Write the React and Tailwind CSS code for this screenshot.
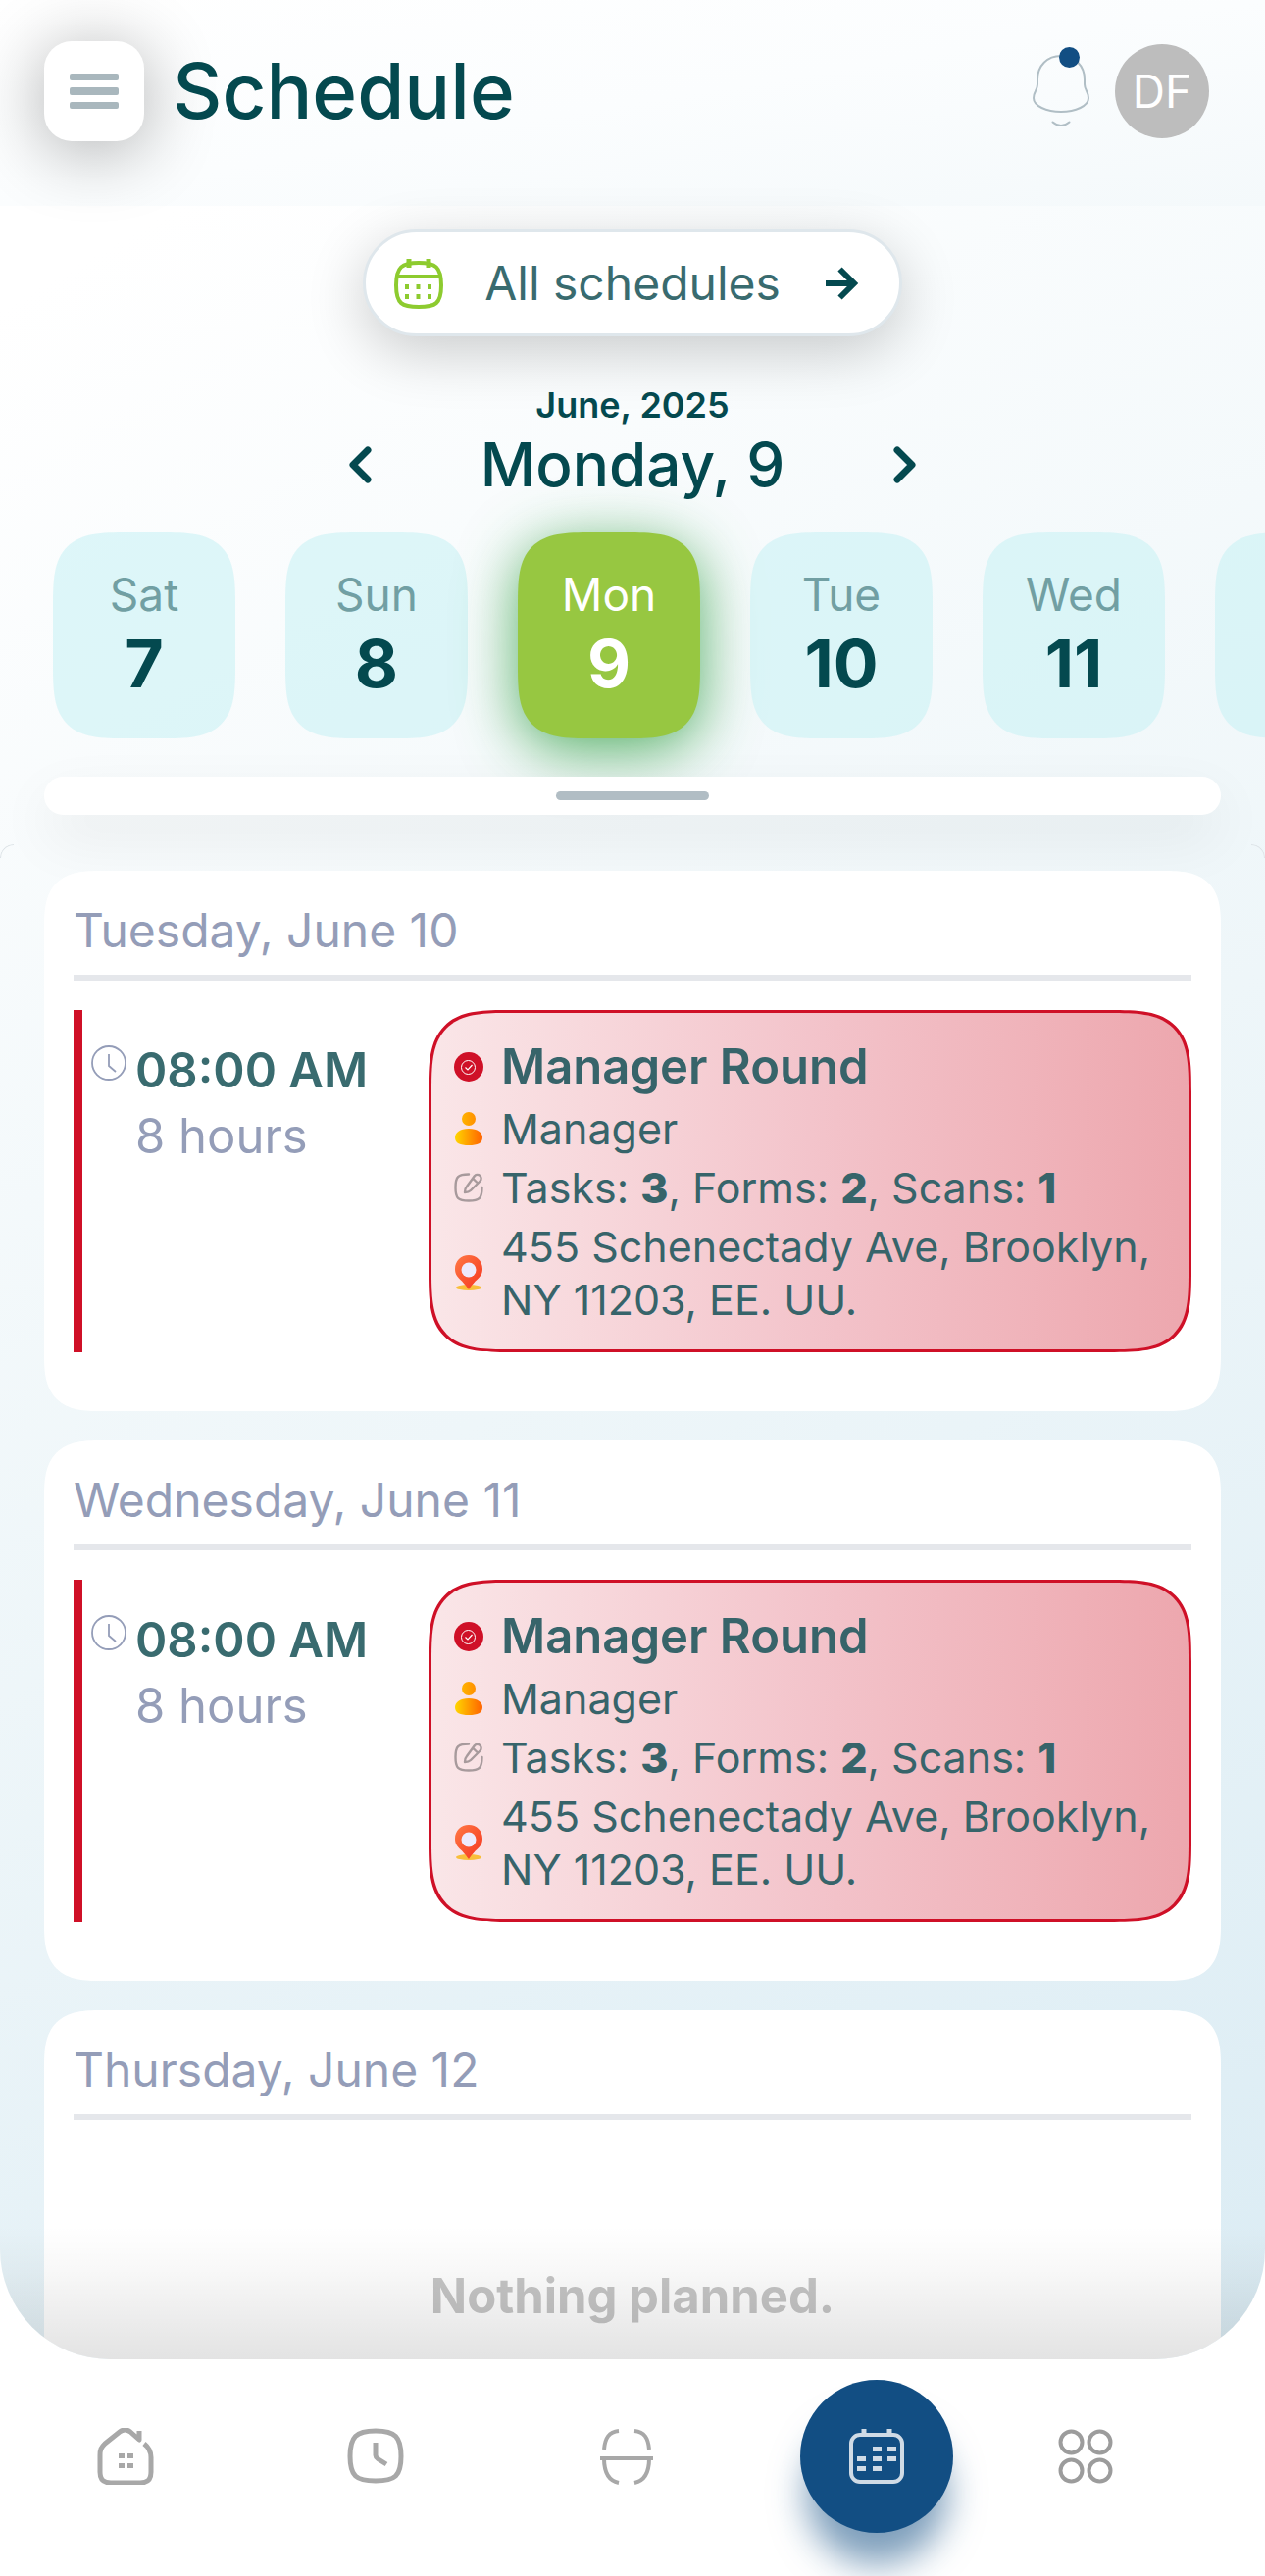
import React, { useState } from 'react';

const days = [
  { id: 7, name: 'Sat' },
  { id: 8, name: 'Sun' },
  { id: 9, name: 'Mon' },
  { id: 10, name: 'Tue' },
  { id: 11, name: 'Wed' },
  { id: 12, name: 'Thu' }
];

const managerRound = {
  time: '08:00 AM',
  duration: '8 hours',
  title: 'Manager Round',
  role: 'Manager',
  tasks: 3,
  forms: 2,
  scans: 1,
  address: '455 Schenectady Ave, Brooklyn, NY 11203, EE. UU.'
};

const schedule = [
  { date: 'Tuesday, June 10', events: [managerRound] },
  { date: 'Wednesday, June 11', events: [managerRound] },
  { date: 'Thursday, June 12', events: [] }
];

function MenuIcon() {
  return (
    <svg viewBox="0 0 50 36" className="h-9 w-[50px]" fill="#a9b7bd">
      <rect width="50" height="7" rx="2" />
      <rect y="14" width="50" height="8" rx="2" />
      <rect y="29" width="50" height="7" rx="2" />
    </svg>
  );
}

function BellIcon() {
  return (
    <svg viewBox="0 0 58 74" className="h-[74px] w-[58px]" fill="none" stroke="#b0bec5" strokeWidth="2" strokeLinecap="round">
      <path d="M29 1C15 1 5 11 5 25v5c0 6-4 7-4 14 0 8 13 14 28 14s28-6 28-14c0-7-4-8-4-14v-5C53 11 43 1 29 1z" />
      <path d="M20.500 68.500c5 4.500 12 4.500 17 0" />
    </svg>
  );
}

function ScheduleIcon() {
  return (
    <svg viewBox="0 0 50 52" className="h-[52px] w-[50px]" fill="none" stroke="#8dcb2f" strokeWidth="4">
      <path d="M25 5c17 0 23 4 23 23s-6 22-23 22S2 47 2 28 8 5 25 5zM3 19h44" />
      <path d="M15 1v9M35 1v9" strokeWidth="5" />
      <path d="M13 27v5M24.500 27v5M36 27v5M13 37v5M24.500 37v5M36 37v5" strokeWidth="4" />
    </svg>
  );
}

function ArrowIcon() {
  return (
    <svg viewBox="0 0 34 34" className="h-[34px] w-[34px]" fill="none" stroke="#04494f" strokeWidth="6">
      <path d="M0 17h30M14.500 2.500L29 17 14.500 31.500" />
    </svg>
  );
}

function ChevronIcon({ direction }) {
  return (
    <svg viewBox="0 0 24 40" className="h-10 w-6" fill="none" stroke="#04494f" strokeWidth="7" strokeLinecap="round" strokeLinejoin="round">
      <path d={direction === 'left' ? 'M19 5L4 20l15 15' : 'M5 5l15 15L5 35'} />
    </svg>
  );
}

function ClockIcon() {
  return (
    <svg viewBox="0 0 36 36" className="h-9 w-9" fill="none" stroke="#949db8" strokeWidth="1.800">
      <circle cx="18" cy="18" r="17" />
      <path d="M18 9v12l7 6" />
    </svg>
  );
}

function StatusIcon() {
  return (
    <svg viewBox="0 0 30 30" className="h-[30px] w-[30px] shrink-0" fill="none" stroke="#fff">
      <circle cx="15" cy="15" r="15" fill="#cf1027" stroke="none" />
      <circle cx="14.500" cy="15.500" r="7" strokeWidth="1" />
      <path d="M11.500 15.500l2.500 2.500 4.500-5" strokeWidth="1.200" />
    </svg>
  );
}

function PersonIcon() {
  return (
    <svg viewBox="0 0 30 36" className="h-9 w-[30px] shrink-0">
      <defs>
        <linearGradient id="head" x1="0" x2="1">
          <stop offset="0" stopColor="#ffb300" />
          <stop offset="1" stopColor="#ff8f00" />
        </linearGradient>
        <linearGradient id="body" x1="0" x2="1">
          <stop offset="0" stopColor="#ffd600" />
          <stop offset="1" stopColor="#ff6200" />
        </linearGradient>
      </defs>
      <circle cx="15" cy="8" r="7" fill="url(#head)" />
      <path d="M15 18c9 0 14 4 14 9 0 6-5 8-14 8S1 33 1 27c0-5 5-9 14-9z" fill="url(#body)" />
    </svg>
  );
}

function EditIcon() {
  return (
    <svg viewBox="0 0 30 30" className="h-[30px] w-[30px] shrink-0" fill="none" stroke="#a79a9c" strokeWidth="2.400" strokeLinecap="round" strokeLinejoin="round">
      <path d="M15 1.500C4 1.500 1.500 4 1.500 15s2.500 13.500 13.500 13.500S28.500 26 28.500 15" />
      <path d="M21 3c1.500-1.500 4-1.500 5.500 0s1.500 4 0 5.500L17 18c-1.500 1.500-3.500 2-6 2 0-2.500.5-4.500 2-6L21 3zM19 5.500l5 5" />
    </svg>
  );
}

function PinIcon() {
  return (
    <svg viewBox="0 0 30 36" className="h-9 w-[30px] shrink-0">
      <defs>
        <linearGradient id="pin" x1="0" y1="0" x2="1" y2="1">
          <stop offset="0" stopColor="#ff7a45" />
          <stop offset="1" stopColor="#f5341f" />
        </linearGradient>
      </defs>
      <ellipse cx="15" cy="33" rx="13" ry="3" fill="#f9bf3b" />
      <path d="M15 0c8 0 14 6 14 14 0 9-6 9-14 21C7 23 1 23 1 14 1 6 7 0 15 0z" fill="url(#pin)" />
      <circle cx="15" cy="15" r="7.500" fill="#eeeafc" />
    </svg>
  );
}

function HomeIcon() {
  return (
    <svg viewBox="0 0 58 58" className="h-[58px] w-[58px]" fill="none" stroke="#a8a8a8" strokeWidth="5" strokeLinejoin="round">
      <path d="M48 16c5 4 7 8 7 14v15c0 8-4 11-11 11H14C7 56 3 53 3 45V28c0-6 1-8 5-12L23 4c4-3 7-3 11 0l9 8V3" />
      <path d="M22 26h6v5h-6zM31 26h6v5h-6zM22 36h6v5h-6zM31 36h6v5h-6z" fill="#a8a8a8" stroke="none" />
    </svg>
  );
}

function TimeIcon() {
  return (
    <svg viewBox="0 0 58 58" className="h-[58px] w-[58px]" fill="none" stroke="#a8a8a8" strokeWidth="5">
      <path d="M29 3c20 0 26 6 26 26s-6 25-26 25S3 49 3 29 9 3 29 3z" />
      <path d="M29 15v13c0 2 1 2.500 3 4l8 5" />
    </svg>
  );
}

function ScanIcon() {
  return (
    <svg viewBox="0 0 58 58" className="h-[58px] w-[58px]" fill="none" stroke="#a8a8a8" strokeWidth="4">
      <path d="M21 3C11 4 7 10 6 22M37 3c10 1 14 7 15 19M2 31h54M6 31c0 15 5 23 15 25M52 31c0 15-5 23-15 25" />
    </svg>
  );
}

function CalendarIcon() {
  return (
    <svg viewBox="0 0 58 58" className="h-[58px] w-[58px]" fill="none" stroke="#d0dbe6" strokeWidth="4">
      <rect x="3" y="7" width="52" height="48" rx="9" />
      <path d="M16 1v7M42 1v7" strokeWidth="5" />
      <path d="M25 19h9v5h-9zM40 19h9v5h-9zM9 29h9v5H9zM25 29h9v5h-9zM40 29h9v5h-9zM9 39h9v5H9zM25 39h9v5h-9z" fill="#d0dbe6" stroke="none" />
    </svg>
  );
}

function GridIcon() {
  return (
    <svg viewBox="0 0 58 58" className="h-[58px] w-[58px]" fill="none" stroke="#9c9c9c" strokeWidth="4">
      <circle cx="14.500" cy="14.500" r="11" />
      <circle cx="43.500" cy="14.500" r="11" />
      <circle cx="14.500" cy="43.500" r="11" />
      <circle cx="43.500" cy="43.500" r="11" />
    </svg>
  );
}

function Header() {
  return (
    <header className="flex h-[210px] shrink-0 items-start bg-linear-to-br from-white via-[#fbfdfe] to-[#f4f9fb] pt-[42px] pr-[57px] pl-[45px]">
      <button type="button" aria-label="Menu" className="flex h-[102px] w-[102px] items-center justify-center rounded-[28px] bg-white shadow-[0_9px_72px_rgba(0,0,0,0.32)]">
        <MenuIcon />
      </button>
      <h1 className="ml-[29px] text-[78px] leading-[102px] font-medium text-[#04494f]">Schedule</h1>
      <div className="ml-auto flex h-[102px] items-center gap-[26px]">
        <button type="button" aria-label="Notifications" className="relative">
          <BellIcon />
          <span className="absolute -top-2 right-[10px] h-[21px] w-[21px] rounded-full bg-[#124e83]" />
        </button>
        <div className="flex h-24 w-24 items-center justify-center rounded-full bg-[#bdbdbd] text-[46px] text-white">DF</div>
      </div>
    </header>
  );
}

function EventRow({ event }) {
  return (
    <div className="flex">
      <div className="flex w-[362px] shrink-0 border-l-[9px] border-[#cf1027] pt-9 pl-[9px]">
        <ClockIcon />
        <div className="-mt-2 ml-[9px] text-[49px] leading-[67px]">
          <p className="font-semibold text-[#396b6f]">{event.time}</p>
          <p className="text-[#949db8]">{event.duration}</p>
        </div>
      </div>
      <div className="flex min-w-0 flex-1 flex-col gap-1.5 rounded-[84px] border-[3px] border-[#cf1027] bg-linear-to-r from-[#fae6e8] via-[#f3c4cb] to-[#eda7ae] pt-[25px] pr-3 pb-6 pl-[23px] text-[43px] leading-[54px] text-[#37646a] [corner-shape:superellipse(1.7)]">
        <div className="flex items-center gap-[18px]">
          <StatusIcon />
          <h3 className="text-[49px] leading-[60px] font-semibold">{event.title}</h3>
        </div>
        <div className="flex items-center gap-[18px]">
          <PersonIcon />
          <p>{event.role}</p>
        </div>
        <div className="flex items-center gap-[18px]">
          <EditIcon />
          <p>
            Tasks: <b className="font-extrabold">{event.tasks}</b>, Forms: <b className="font-extrabold">{event.forms}</b>, Scans:{' '}
            <b className="font-extrabold">{event.scans}</b>
          </p>
        </div>
        <div className="flex items-center gap-[18px]">
          <PinIcon />
          <p>{event.address}</p>
        </div>
      </div>
    </div>
  );
}

function DayCard({ day }) {
  return (
    <section className="rounded-[58px] bg-white px-[30px] pt-[31px] pb-[60px] [corner-shape:superellipse(1.5)]">
      <h2 className="border-b-[6px] border-[#e5e7eb] pb-[15px] text-[48px] leading-[60px] text-[#949db8]">{day.date}</h2>
      <div className="pt-[30px]">
        {day.events.map(event => (
          <EventRow key={event.title} event={event} />
        ))}
        {day.events.length === 0 && (
          <p className="pt-[120px] text-center text-[49px] leading-[60px] font-bold text-[#c6c6c6]">Nothing planned.</p>
        )}
      </div>
    </section>
  );
}

function BottomNav() {
  return (
    <nav className="grid h-[221px] shrink-0 grid-cols-[3fr_3fr_3fr_3fr_2fr] items-center justify-items-center overflow-hidden pr-[98px] pb-6">
      <a href="#home" aria-label="Home"><HomeIcon /></a>
      <a href="#time" aria-label="Time"><TimeIcon /></a>
      <a href="#scan" aria-label="Scan"><ScanIcon /></a>
      <a href="#schedule" aria-label="Schedule" className="flex h-[156px] w-[156px] items-center justify-center rounded-full bg-[#124e83] shadow-[0_38px_36px_-6px_rgba(18,78,131,0.55)]">
        <CalendarIcon />
      </a>
      <a href="#more" aria-label="More"><GridIcon /></a>
    </nav>
  );
}

function App() {
  const [selected, setSelected] = useState(9);

  return (
    <div className="flex h-screen flex-col bg-white font-[Inter,sans-serif]">
      <div className="relative flex min-h-0 flex-1 flex-col overflow-hidden rounded-b-[112px] bg-linear-150 from-white from-10% via-[#eef6f9] via-55% to-[#dbecf4]">
        <Header />

        {/* Date picker */}
        <div className="flex shrink-0 flex-col items-center pt-6">
          <button type="button" className="flex h-[109px] w-[550px] items-center rounded-full border-[3px] border-[#dfe7ec] bg-white pr-[41px] pl-[29px] shadow-[0_16px_60px_rgba(0,0,0,0.2)]">
            <ScheduleIcon />
            <span className="flex-1 pr-1 text-center text-[48px] text-[#396b6f]">All schedules</span>
            <ArrowIcon />
          </button>
          <p className="mt-12 text-[36px] leading-[45px] font-semibold text-[#04494f]">June, 2025</p>
          <div className="flex h-[75px] w-[578px] items-center justify-between">
            <button type="button" aria-label="Previous day"><ChevronIcon direction="left" /></button>
            <span className="text-[62px] leading-[75px] font-medium text-[#04494f]">Monday, 9</span>
            <button type="button" aria-label="Next day"><ChevronIcon direction="right" /></button>
          </div>
        </div>

        {/* Week strip */}
        <div className="flex shrink-0 gap-[51px] pt-8 pl-[54px]">
          {days.map(day => (
            <button
              key={day.id}
              type="button"
              onClick={() => setSelected(day.id)}
              className={
                day.id === selected
                  ? 'flex h-[210px] w-[186px] shrink-0 flex-col items-center rounded-[76px] bg-[#97c741] pt-[33px] text-white shadow-[0_12px_60px_rgba(30,150,50,0.75)] [corner-shape:superellipse(1.7)]'
                  : 'flex h-[210px] w-[186px] shrink-0 flex-col items-center rounded-[76px] bg-[#c9f1f5]/60 pt-[33px] text-[#04494f] [corner-shape:superellipse(1.7)]'
              }
            >
              <span className={day.id === selected ? 'text-[46px] leading-[60px]' : 'text-[46px] leading-[60px] text-[#719fa3]'}>{day.name}</span>
              <span className="text-[68px] leading-[80px] font-bold">{day.id}</span>
            </button>
          ))}
        </div>

        <div className="mx-[45px] mt-[39px] mb-[30px] flex h-[39px] shrink-0 items-center justify-center rounded-full bg-white shadow-[0_24px_60px_rgba(0,0,0,0.07)]">
          <div className="h-[9px] w-[156px] rounded-full bg-[#b1bdc4]" />
        </div>

        <main className="relative flex min-h-0 flex-1 flex-col gap-[30px] overflow-y-auto rounded-t-[14px] px-[45px] pt-[27px] [scrollbar-width:none]">
          <span className="absolute top-0 left-0 h-3.5 w-3.5 rounded-tl-[14px] border-t border-l border-[#dde3e7]" />
          <span className="absolute top-0 right-0 h-3.5 w-3.5 rounded-tr-[14px] border-t border-r border-[#dde3e7]" />
          {schedule.map(day => (
            <DayCard key={day.date} day={day} />
          ))}
        </main>

        <div className="pointer-events-none absolute inset-x-0 bottom-0 h-[136px] bg-linear-to-t from-black/11 via-black/3 via-65% to-transparent" />
      </div>

      <BottomNav />
    </div>
  );
}

export default App;
